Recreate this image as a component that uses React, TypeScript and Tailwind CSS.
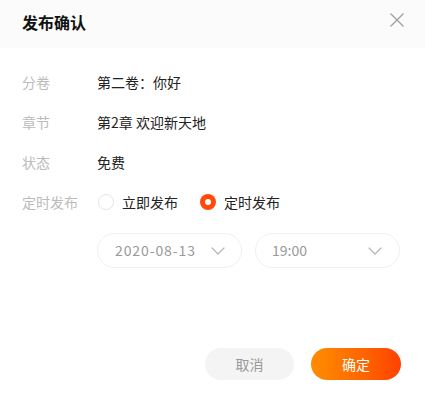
import { X } from "lucide-react"

const font = { fontFamily: '"PingFang SC", "Noto Sans CJK SC", "Liberation Sans", sans-serif' }

function Row({ label, children }: { label: string; children: React.ReactNode }) {
  return (
    <div className="flex h-10 items-center">
      <div className="w-[75px] text-[14px] text-[#bbbbbb]">{label}</div>
      <div className="flex items-center text-[14px] text-[#222222]">{children}</div>
    </div>
  )
}

function Chevron() {
  return (
    <svg width="14" height="8" viewBox="0 0 14 8" fill="none" className="text-[#b5b5b5]">
      <polyline points="1,1 7,7 13,1" stroke="currentColor" strokeWidth="1.2" strokeLinecap="round" strokeLinejoin="round" />
    </svg>
  )
}

export default function App() {
  return (
    <div className="h-[399px] w-[425px] bg-white" style={font}>
      <div className="flex h-12 items-center justify-between bg-[#fbfbfb] pl-[22px] pr-[16px]">
        <span className="pb-[5px] text-[16px] font-bold text-[#111111]">发布确认</span>
        <X className="mb-[8px] h-[24px] w-[24px] text-[#a0a0a0]" strokeWidth={1.4} />
      </div>

      <div className="px-[22px] pt-[14px]">
        <Row label="分卷">第二卷：你好</Row>
        <Row label="章节">第2章 欢迎新天地</Row>
        <Row label="状态">免费</Row>
        <Row label="定时发布">
          <span className="ml-[1px] h-4 w-4 rounded-full border border-[#e5e5e5]" />
          <span className="ml-[8px]">立即发布</span>
          <span className="ml-[22px] flex h-4 w-4 items-center justify-center rounded-full bg-[#ff4a0a]">
            <span className="h-[6px] w-[6px] rounded-full bg-white" />
          </span>
          <span className="ml-[8px]">定时发布</span>
        </Row>

        <div className="ml-[75px] mt-[11px] flex gap-[13px]">
          <div className="flex h-[35px] w-[145px] items-center justify-between rounded-full border border-[#f0f0f0] pl-[17px] pr-[16px] text-[14px] tracking-[0.9px] text-[#999999]">
            <span>2020-08-13</span>
            <Chevron />
          </div>
          <div className="flex h-[35px] w-[145px] items-center justify-between rounded-full border border-[#f0f0f0] pl-[16px] pr-[17px] text-[14px] text-[#999999]">
            <span>19:00</span>
            <Chevron />
          </div>
        </div>
      </div>

      <div className="mt-[80px] flex justify-end gap-[17px] pr-[24px]">
        <button className="h-8 w-[89px] rounded-full bg-[#f4f4f4] text-[14px] text-[#999999]">取消</button>
        <button className="h-8 w-[90px] rounded-full bg-gradient-to-r from-[#ff8c00] to-[#ff4000] text-[14px] text-white">确定</button>
      </div>
    </div>
  )
}
